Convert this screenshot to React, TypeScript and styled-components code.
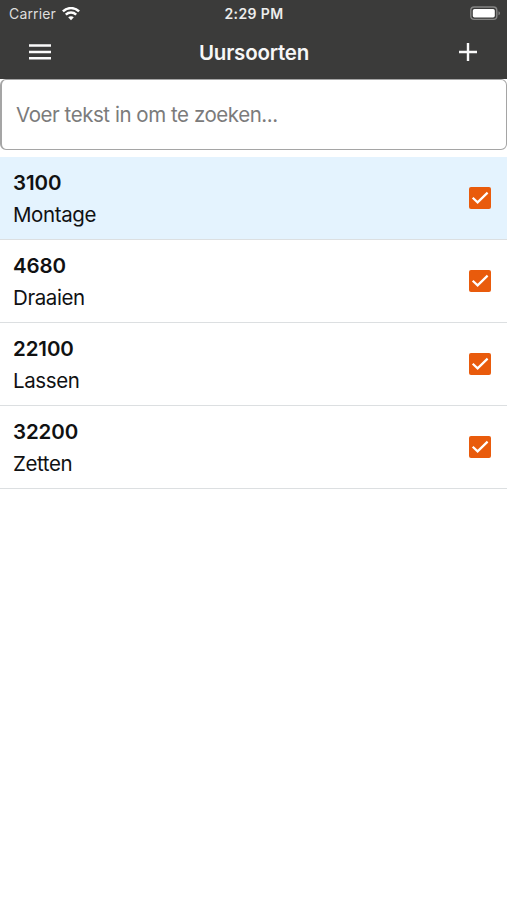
import React, { useState } from "react";
import styled, { createGlobalStyle } from "styled-components";

const GlobalStyle = createGlobalStyle`
  * { box-sizing: border-box; }
  body {
    margin: 0;
    background: #fff;
    color: #101112;
    font-family: Inter, "Liberation Sans", sans-serif;
  }
`;

const Screen = styled.main`
  display: flex;
  flex-direction: column;
  width: 100%;
  height: 100vh;
  overflow: hidden;
  background: #fff;
`;

const Header = styled.header`
  height: 79px;
  background: #3b3b3a;
  color: #f7f7f7;
`;

const StatusBar = styled.div`
  display: grid;
  grid-template-columns: 1fr auto 1fr;
  align-items: center;
  height: 27px;
  padding: 0 6px 0 7px;
`;

const Carrier = styled.div`
  display: flex;
  align-items: center;
  gap: 6px;
  padding-left: 2px;
  color: #dededd;
  font-size: 14px;
  line-height: 27px;
  letter-spacing: 0.15px;
`;

const Clock = styled.time`
  font-size: 14px;
  font-weight: 600;
  letter-spacing: 0.4px;
  color: #ededed;
`;

const BatteryIcon = styled.svg`
  justify-self: end;
  display: block;
`;

const NavBar = styled.nav`
  display: grid;
  grid-template-columns: 80px 1fr 79px;
  grid-template-rows: 50px;
  align-items: center;
  height: 50px;
`;

const NavButton = styled.button`
  display: flex;
  align-items: center;
  justify-content: center;
  height: 50px;
  padding: 0;
  border: 0;
  background: none;
  color: #fafafa;
`;

const Title = styled.h1`
  margin: 0;
  padding-top: 1px;
  text-align: center;
  font-size: 20.5px;
  font-weight: 600;
  line-height: 49px;
  letter-spacing: -0.2px;
`;

const SearchField = styled.input`
  flex: none;
  width: 100%;
  height: 71px;
  margin: 0 0 7px;
  padding: 0 14px;
  border: 1px solid #a5a5a5;
  border-left-width: 2px;
  border-radius: 6px;
  outline: 0;
  background: #fff;
  font-family: inherit;
  font-size: 20.5px;
  letter-spacing: -0.45px;
  &::placeholder { color: #7b7b7b; opacity: 1; }
`;

const List = styled.ul`
  margin: 0;
  padding: 0;
  list-style: none;
`;

const Row = styled.li<{ $selected: boolean }>`
  display: flex;
  align-items: center;
  justify-content: space-between;
  height: 83px;
  padding: 0 16px 0 13px;
  border-bottom: 1px solid #dcdfe1;
  background: ${(p) => (p.$selected ? "#e4f3fe" : "#fff")};
`;

const Labels = styled.div`
  display: flex;
  flex-direction: column;
  padding-top: 1px;
  font-size: 20.5px;
  line-height: 32px;
`;

const Code = styled.strong`
  font-weight: 600;
  letter-spacing: -0.1px;
`;

const Name = styled.span`
  letter-spacing: -0.4px;
`;

const Checkbox = styled.button`
  width: 22px;
  height: 22px;
  padding: 0;
  border: 0;
  border-radius: 2px;
  background: #e95b0c;
  svg { display: block; }
`;

const items = [
  { code: "3100", name: "Montage" },
  { code: "4680", name: "Draaien" },
  { code: "22100", name: "Lassen" },
  { code: "32200", name: "Zetten" },
];

export default function App() {
  const [checked, setChecked] = useState(items.map(() => true));
  const toggle = (index: number) =>
    setChecked((values) => values.map((v, i) => (i === index ? !v : v)));

  return (
    <>
      <GlobalStyle />
      <Screen>
        <Header>
          <StatusBar>
            <Carrier>
              Carrier
              <svg width="18" height="14" viewBox="0 0 18 14" fill="none" stroke="#fff" strokeWidth="2.5">
                <path d="M.9 4.4C5.5 0 12.5 0 17.1 4.4" />
                <path d="M3.8 7.7C6.8 4.9 11.2 4.9 14.2 7.7" />
                <path d="M6.2 10.3C7.8 8.8 10.2 8.8 11.8 10.3L9 13.2Z" fill="#fff" stroke="none" />
              </svg>
            </Carrier>
            <Clock>2:29 PM</Clock>
            <BatteryIcon width="31" height="15" viewBox="0 0 31 15">
              <rect x=".8" y="1" width="26" height="12.4" rx="3.4" fill="none" stroke="#858584" strokeWidth="1.4" />
              <rect x="2.8" y="3" width="22" height="8.4" rx="1.7" fill="#fff" />
              <path d="M28.5 5.2c2 .7 2 3.3 0 4z" fill="#858584" />
            </BatteryIcon>
          </StatusBar>
          <NavBar>
            <NavButton aria-label="Menu">
              <svg width="22" height="16" viewBox="0 0 22 16" fill="currentColor">
                <path d="M0 .3h22v2.5H0zM0 6.7h22v2.5H0zM0 13.1h22v2.5H0z" />
              </svg>
            </NavButton>
            <Title>Uursoorten</Title>
            <NavButton aria-label="Toevoegen">
              <svg width="18" height="18" viewBox="0 0 18 18" fill="currentColor">
                <path d="M7.8 0h2.4v7.8H18v2.4h-7.8V18H7.8v-7.8H0V7.8h7.8z" />
              </svg>
            </NavButton>
          </NavBar>
        </Header>
        <SearchField placeholder="Voer tekst in om te zoeken..." />
        <List>
          {items.map((item, i) => (
            <Row key={item.code} $selected={i === 0}>
              <Labels>
                <Code>{item.code}</Code>
                <Name>{item.name}</Name>
              </Labels>
              <Checkbox role="checkbox" aria-checked={checked[i]} aria-label={item.name} onClick={() => toggle(i)}>
                {checked[i] && (
                  <svg width="22" height="22" viewBox="0 0 22 22" fill="none" stroke="#fff" strokeWidth="2.2">
                    <path d="M3.7 10.8 8.6 15.4 18.6 5.6" />
                  </svg>
                )}
              </Checkbox>
            </Row>
          ))}
        </List>
      </Screen>
    </>
  );
}
